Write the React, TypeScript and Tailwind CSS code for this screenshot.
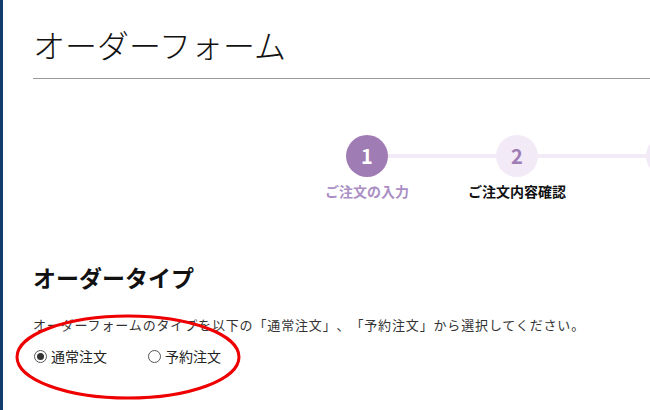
const jp = "font-['Noto_Sans_CJK_JP','Noto_Sans',sans-serif]";

const steps = [
  { no: '1', label: 'ご注文の入力', active: true },
  { no: '2', label: 'ご注文内容確認', active: false },
  { no: '3', label: '完了', active: false },
];

const Radio = ({ checked, label }: { checked?: boolean; label: string }) => (
  <label className="flex items-center gap-[4px]">
    <span className="flex h-[13px] w-[13px] items-center justify-center rounded-full border border-[#555] bg-white">
      {checked && <span className="h-[7px] w-[7px] rounded-full bg-[#333]" />}
    </span>
    <span className="text-[14px] leading-[20px] text-[#222]">{label}</span>
  </label>
);

export default function App() {
  return (
    <div className={`relative h-[410px] w-[650px] overflow-hidden border-l-[3px] border-[#103b6b] bg-white ${jp} [text-spacing-trim:space-all]`}>
      <div className="pl-[30px]">
        <h1 className="mt-[21px] text-[32px] font-light leading-[46px] text-[#111]">
          オーダーフォーム
        </h1>
        <div className="mt-[11px] h-px bg-[#9a9a9a]" />

        {/* stepper */}
        <div className="mt-[56px] flex items-center pl-[313px]">
          {steps.map((s, i) => (
            <div key={s.no} className="flex items-center">
              <div
                className={`flex h-[42px] w-[42px] shrink-0 items-center justify-center rounded-full text-[20px] font-bold ${
                  s.active ? 'bg-[#a07cb5] text-white' : 'bg-[#f3eaf8] text-[#a07cb5]'
                }`}
              >
                {i < 2 ? s.no : ''}
              </div>
              {i < steps.length - 1 && <div className="h-[4px] w-[108px] bg-[#f3eaf8]" />}
            </div>
          ))}
        </div>
        <div className="mt-[4px] flex pl-[259px]">
          {steps.slice(0, 2).map((s) => (
            <div
              key={s.no}
              className={`w-[150px] shrink-0 text-center text-[14px] font-bold leading-[20px] ${
                s.active ? 'text-[#ab8fc4]' : 'text-[#111]'
              }`}
            >
              {s.label}
            </div>
          ))}
        </div>

        <h2 className="mt-[60px] text-[23px] font-bold leading-[32px] text-[#111]">オーダータイプ</h2>
        <p className="mt-[22px] text-[13px] leading-[20px] tracking-[0.85px] text-[#333]">
          オーダーフォームのタイプを以下の「通常注文」、「予約注文」から選択してください。
        </p>
        <div className="mt-[11px] flex items-center gap-[41px] pl-[1px]">
          <Radio checked label="通常注文" />
          <Radio label="予約注文" />
        </div>
      </div>

      {/* red annotation */}
      <svg className="absolute left-[10px] top-[312px]" width="236" height="92" viewBox="0 0 236 92">
        <ellipse cx="115" cy="45" rx="111" ry="41" fill="none" stroke="#ee0000" strokeWidth="3" />
      </svg>
    </div>
  );
}
